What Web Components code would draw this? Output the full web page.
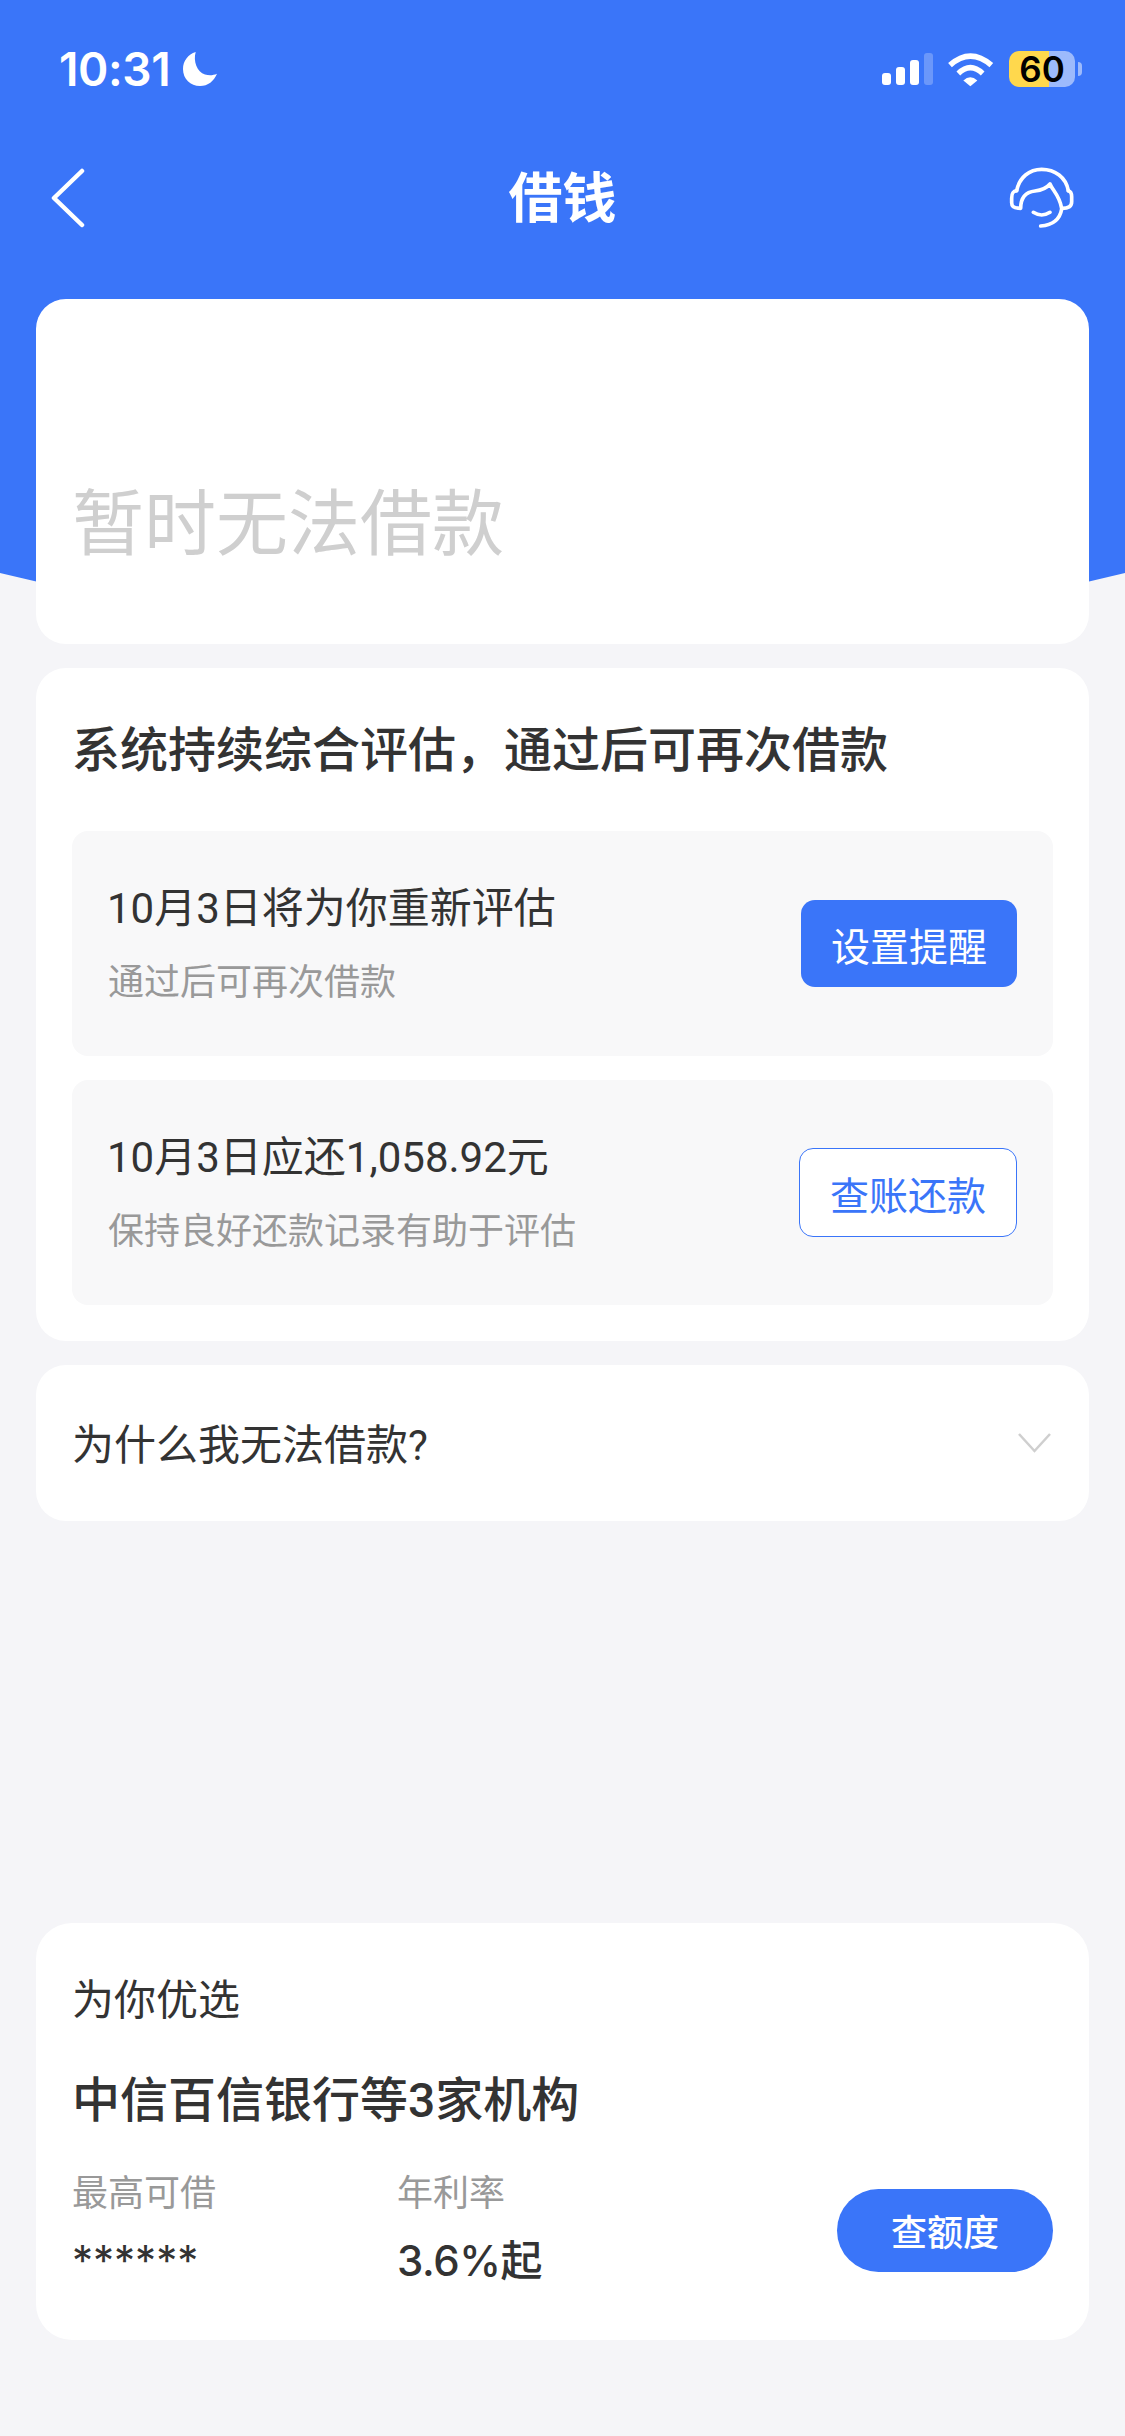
<!DOCTYPE html>
<html lang="zh-CN">
<head>
<meta charset="utf-8">
<title>借钱</title>
<style>
    html, body {
        margin: 0;
        height: 2436px;
        overflow: hidden;
        background: #f5f5f8;
        font-family: Roboto, "Noto Sans CJK SC", sans-serif;
        color: #333;
    }
</style>
</head>
<body>
<loan-page>
    <status-bar slot="top" time="10:31" battery="60"></status-bar>
    <nav-bar slot="top" title="借钱"></nav-bar>

    <status-card></status-card>

    <info-card heading="系统持续综合评估，通过后可再次借款">
        <notice-row title="10月3日将为你重新评估" note="通过后可再次借款">
            <action-button kind="solid">设置提醒</action-button>
        </notice-row>
        <notice-row title="10月3日应还1,058.92元" note="保持良好还款记录有助于评估">
            <action-button kind="outline">查账还款</action-button>
        </notice-row>
    </info-card>

    <faq-row>为什么我无法借款?</faq-row>

    <offer-card
        slot="bottom"
        label="为你优选"
        name="中信百信银行等3家机构"
        amount="******"
        rate="3.6%起">
        <action-button kind="pill">查额度</action-button>
    </offer-card>
</loan-page>

<script>
class LoanPage extends HTMLElement {
    constructor() {
        super();
        this.attachShadow({ mode: 'open' });
        this.shadowRoot.innerHTML = `
            <style>
                :host {
                    display: block;
                    position: relative;
                    width: 1125px;
                    height: 2436px;
                }
                .backdrop {
                    position: absolute;
                    left: 0;
                    top: 0;
                    display: block;
                }
                .content {
                    position: relative;
                    display: flex;
                    flex-direction: column;
                    height: 100%;
                }
                .cards {
                    display: flex;
                    flex-direction: column;
                    gap: 24px;
                    padding: 0 36px;
                }
                .bottom {
                    margin-top: auto;
                    padding: 0 36px 96px;
                }
            </style>
            <svg class="backdrop" width="1125" height="660" viewBox="0 0 1125 660">
                <path d="M0 0H1125V573Q562 713 0 573Z" fill="#3a75f9"/>
            </svg>
            <div class="content">
                <slot name="top"></slot>
                <div class="cards"><slot></slot></div>
                <div class="bottom"><slot name="bottom"></slot></div>
            </div>
        `;
    }
}

class StatusBar extends HTMLElement {
    constructor() {
        super();
        this.attachShadow({ mode: 'open' });
    }

    connectedCallback() {
        const time = this.getAttribute('time') || '';
        const battery = this.getAttribute('battery') || '';
        this.shadowRoot.innerHTML = `
            <style>
                :host {
                    display: flex;
                    align-items: center;
                    justify-content: space-between;
                    height: 138px;
                    padding: 0 43px 0 59px;
                    color: #fff;
                }
                .left, .right { display: flex; align-items: center; }
                .left { gap: 13px; }
                .time {
                    font: 600 46px/1 Inter, sans-serif;
                    letter-spacing: -0.4px;
                }
                .right { gap: 13px; }
                svg { display: block; }
                .battery { display: flex; align-items: center; gap: 3px; }
                .level {
                    display: flex;
                    align-items: center;
                    justify-content: center;
                    width: 66px;
                    height: 36px;
                    border-radius: 10px;
                    background: linear-gradient(90deg, #ffd84d 60%, rgba(255, 255, 255, 0.5) 60%);
                    color: #000;
                    font: 600 35px/1 Inter, sans-serif;
                }
                .nub {
                    width: 4px;
                    height: 14px;
                    border-radius: 0 7px 7px 0;
                    background: rgba(255, 255, 255, 0.5);
                }
            </style>
            <div class="left">
                <span class="time">${time}</span>
                <svg width="34" height="34" viewBox="0 0 34 34">
                    <path fill="#fff" d="M12.7 0C5 2.5 0 9 0 17C0 27 7.5 34 17 34C25 34 31 29 34 21.7C30 23.5 26 23.5 22 22.5C14 20 10 9 12.7 0Z"/>
                </svg>
            </div>
            <div class="right">
                <svg width="51" height="32" viewBox="0 0 51 32" fill="#fff">
                    <rect x="0" y="20" width="9" height="12" rx="3"/>
                    <rect x="14" y="14" width="9" height="18" rx="3"/>
                    <rect x="28" y="7" width="9" height="25" rx="3"/>
                    <rect x="42" y="0" width="9" height="32" rx="3" opacity="0.25"/>
                </svg>
                <svg width="50" height="37" viewBox="320 60 150 110" fill="none" stroke="#fff">
                    <path stroke-width="17" d="M332 102Q393 48 456 102"/>
                    <path stroke-width="16" d="M357 127Q393 92 430 127"/>
                    <path fill="#fff" stroke="none" d="M372 148Q393 128 414 148L393 165Z"/>
                </svg>
                <div class="battery">
                    <div class="level">${battery}</div>
                    <div class="nub"></div>
                </div>
            </div>
        `;
    }
}

class NavBar extends HTMLElement {
    constructor() {
        super();
        this.attachShadow({ mode: 'open' });
    }

    connectedCallback() {
        const title = this.getAttribute('title') || '';
        this.shadowRoot.innerHTML = `
            <style>
                :host {
                    display: grid;
                    grid-template-columns: 1fr auto 1fr;
                    align-items: center;
                    height: 120px;
                    margin-bottom: 41px;
                    padding: 0 41px;
                    color: #fff;
                }
                h1 {
                    margin: -6px 0 0;
                    font: 700 54px/1 "Noto Sans CJK SC", sans-serif;
                }
                svg { display: block; }
                .back { margin-left: 9px; }
                .service { justify-self: end; }
            </style>
            <svg class="back" width="36" height="60" viewBox="0 0 36 60" fill="none" stroke="#fff" stroke-width="4.5" stroke-linecap="round" stroke-linejoin="round">
                <path d="M32 3L4 30L32 57"/>
            </svg>
            <h1>${title}</h1>
            <svg class="service" width="84" height="76" viewBox="0 0 252 228" fill="none" stroke="#fff" stroke-width="11" stroke-linecap="round" stroke-linejoin="round">
                <path d="M50 92C58 52 88 28 125 28C165 28 198 52 205 92"/>
                <path d="M50 92C38 94 35 100 35 115V128C35 140 42 145 62 145C62 112 78 96 105 93C125 91 140 84 150 72C158 92 178 105 185 145C205 145 215 140 215 125V110C215 98 212 94 205 92"/>
                <path d="M185 147C180 178 160 195 122 198"/>
                <path d="M100 157C115 167 135 167 150 157"/>
            </svg>
        `;
    }
}

class StatusCard extends HTMLElement {
    constructor() {
        super();
        this.attachShadow({ mode: 'open' });
        this.shadowRoot.innerHTML = `
            <style>
                :host {
                    display: flex;
                    align-items: flex-end;
                    height: 345px;
                    padding: 0 36px 90px;
                    box-sizing: border-box;
                    border-radius: 30px;
                    background: #fff;
                }
                span {
                    font: 400 72px/1 "Noto Sans CJK SC", sans-serif;
                    color: #cfcfcf;
                }
            </style>
            <span>暂时无法借款</span>
        `;
    }
}

class InfoCard extends HTMLElement {
    constructor() {
        super();
        this.attachShadow({ mode: 'open' });
    }

    connectedCallback() {
        this.shadowRoot.innerHTML = `
            <style>
                :host {
                    display: block;
                    padding: 48px 36px 36px;
                    border-radius: 30px;
                    background: #fff;
                }
                h2 {
                    margin: 0 0 55px;
                    font: 500 48px/60px "Noto Sans CJK SC", sans-serif;
                    color: #333;
                }
                .rows { display: flex; flex-direction: column; gap: 24px; }
            </style>
            <h2>${this.getAttribute('heading') || ''}</h2>
            <div class="rows"><slot></slot></div>
        `;
    }
}

class NoticeRow extends HTMLElement {
    constructor() {
        super();
        this.attachShadow({ mode: 'open' });
    }

    connectedCallback() {
        this.shadowRoot.innerHTML = `
            <style>
                :host {
                    display: flex;
                    align-items: center;
                    justify-content: space-between;
                    height: 225px;
                    padding: 0 36px;
                    border-radius: 16px;
                    background: #f8f8f9;
                }
                .title { font-size: 42px; line-height: 60px; color: #333; margin-left: -1px; }
                .note { margin-top: 19px; font-size: 36px; line-height: 50px; color: #999; }
            </style>
            <div>
                <div class="title">${this.getAttribute('title') || ''}</div>
                <div class="note">${this.getAttribute('note') || ''}</div>
            </div>
            <slot></slot>
        `;
    }
}

class ActionButton extends HTMLElement {
    constructor() {
        super();
        this.attachShadow({ mode: 'open' });
        this.shadowRoot.innerHTML = `
            <style>
                :host {
                    display: flex;
                    align-items: center;
                    justify-content: center;
                    box-sizing: border-box;
                    width: 216px;
                    height: 87px;
                    border-radius: 14px;
                    background: #3a75f9;
                    color: #fff;
                    font-size: 39px;
                }
                :host([kind="outline"]) {
                    width: 218px;
                    height: 89px;
                    border: 1.5px solid #3a75f9;
                    background: #fff;
                    color: #3a75f9;
                }
                :host([kind="pill"]) {
                    width: 216px;
                    height: 83px;
                    border-radius: 42px;
                    font-size: 36px;
                    font-weight: 500;
                }
            </style>
            <slot></slot>
        `;
    }
}

class FaqRow extends HTMLElement {
    constructor() {
        super();
        this.attachShadow({ mode: 'open' });
        this.shadowRoot.innerHTML = `
            <style>
                :host {
                    display: flex;
                    align-items: center;
                    justify-content: space-between;
                    height: 156px;
                    padding: 0 38px 0 36px;
                    border-radius: 30px;
                    background: #fff;
                    font-size: 42px;
                    color: #333;
                }
                .text { margin-top: -3px; }
                svg { display: block; }
            </style>
            <span class="text"><slot></slot></span>
            <svg width="33" height="20" viewBox="0 0 33 20" fill="none" stroke="#cfcfcf" stroke-width="2.5">
                <path d="M1 1L16.5 18L32 1"/>
            </svg>
        `;
    }
}

class OfferCard extends HTMLElement {
    constructor() {
        super();
        this.attachShadow({ mode: 'open' });
    }

    connectedCallback() {
        this.shadowRoot.innerHTML = `
            <style>
                :host {
                    display: block;
                    padding: 48px 36px 49px;
                    border-radius: 36px;
                    background: #fff;
                    color: #333;
                }
                .label { font-size: 42px; line-height: 60px; }
                .name {
                    margin: 38px 0 36px;
                    font: 500 48px/64px Roboto, "Noto Sans CJK SC", sans-serif;
                }
                .foot { display: flex; align-items: center; justify-content: space-between; }
                .stats { display: flex; }
                .stat { width: 325px; }
                .stat:last-child { width: auto; }
                .key { font-size: 36px; line-height: 50px; color: #999; }
                .value {
                    margin-top: 12px;
                    font: 500 42px/60px Inter, "Noto Sans CJK SC", sans-serif;
                    letter-spacing: -0.4px;
                }
                .amount { font-weight: 400; letter-spacing: 0; }
            </style>
            <div class="label">${this.getAttribute('label') || ''}</div>
            <div class="name">${this.getAttribute('name') || ''}</div>
            <div class="foot">
                <div class="stats">
                    <div class="stat">
                        <div class="key">最高可借</div>
                        <div class="value amount">${this.getAttribute('amount') || ''}</div>
                    </div>
                    <div class="stat">
                        <div class="key">年利率</div>
                        <div class="value">${this.getAttribute('rate') || ''}</div>
                    </div>
                </div>
                <slot></slot>
            </div>
        `;
    }
}

customElements.define('loan-page', LoanPage);
customElements.define('status-bar', StatusBar);
customElements.define('nav-bar', NavBar);
customElements.define('status-card', StatusCard);
customElements.define('info-card', InfoCard);
customElements.define('notice-row', NoticeRow);
customElements.define('action-button', ActionButton);
customElements.define('faq-row', FaqRow);
customElements.define('offer-card', OfferCard);
</script>
</body>
</html>
